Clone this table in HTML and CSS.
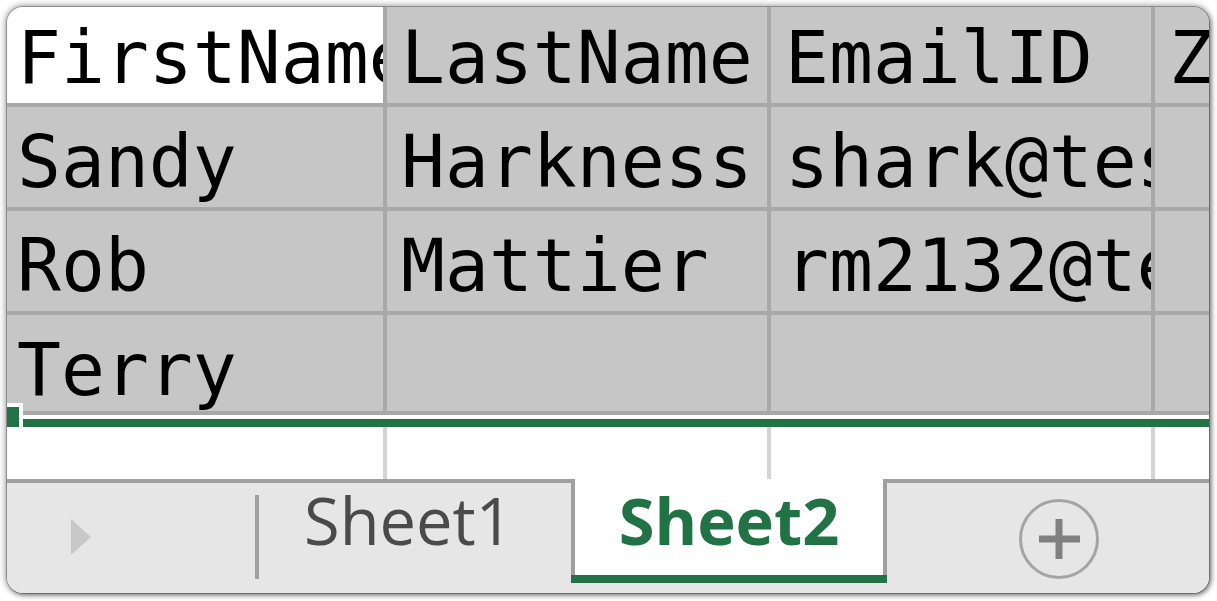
FILE: index.html
```html
<!DOCTYPE html>
<html lang="en">
<head>
<meta charset="utf-8">
<title>Sheet2</title>
<link rel="stylesheet" href="styles.css">
</head>
<body>
<div class="card">
  <div class="sheet">
    <div class="grid">
      <div class="cell active">FirstName</div>
      <div class="cell">LastName</div>
      <div class="cell">EmailID</div>
      <div class="cell">Zip</div>
      <div class="cell">Sandy</div>
      <div class="cell">Harkness</div>
      <div class="cell">shark@test.com</div>
      <div class="cell"></div>
      <div class="cell">Rob</div>
      <div class="cell">Mattier</div>
      <div class="cell">rm2132@test.com</div>
      <div class="cell"></div>
      <div class="cell last">Terry</div>
      <div class="cell last"></div>
      <div class="cell last"></div>
      <div class="cell last"></div>
    </div>
    <div class="sel-edge"></div>
    <div class="grid blank">
      <div class="bcell"></div>
      <div class="bcell"></div>
      <div class="bcell"></div>
      <div class="bcell"></div>
    </div>
    <div class="handle"></div>
  </div>
  <div class="tabbar">
    <div class="nav">
      <svg class="arrow" width="20" height="36" viewBox="0 0 20 36"><polygon points="0,0 20,18 0,36" fill="#c8c8c8"/></svg>
    </div>
    <div class="sep"></div>
    <div class="tab">Sheet1</div>
    <div class="tab-active"><div class="tab-active-inner">Sheet2</div></div>
    <div class="add">
      <svg width="82" height="82" viewBox="0 0 82 82">
        <circle cx="41" cy="41" r="38.5" fill="none" stroke="#a4a4a4" stroke-width="3"/>
        <rect x="21" y="37.5" width="41" height="7" fill="#808080"/>
        <rect x="37.5" y="21" width="7" height="40" fill="#808080"/>
      </svg>
    </div>
  </div>
</div>
</body>
</html>
```

FILE: styles.css
```css
html, body {
  margin: 0;
  padding: 0;
  background: #ffffff;
}

.card {
  margin: 7px;
  width: 1202px;
  height: 586px;
  border-radius: 16px;
  overflow: hidden;
  background: #ffffff;
  display: flex;
  flex-direction: column;
  box-shadow: 0 0 0 1px rgba(0, 0, 0, 0.22), 0 0 7px 1px rgba(0, 0, 0, 0.45), 2px 2px 4px rgba(0, 0, 0, 0.35);
}

.sheet {
  position: relative;
  height: 472px;
  flex: none;
  overflow: hidden;
}

.grid {
  display: grid;
  grid-template-columns: 380px 380px 380px 380px;
  grid-auto-rows: 100px;
  gap: 4px;
  width: 1532px;
  margin: -4px 0 0 -4px;
  background: #a8a8a8;
}

.cell {
  background: #c6c6c6;
  color: #000000;
  font-family: "DejaVu Sans Mono", "Liberation Mono", monospace;
  font-size: 73px;
  line-height: 73px;
  padding: 18px 0 0 14px;
  white-space: nowrap;
  overflow: hidden;
  box-sizing: border-box;
}

.cell.active {
  background: #ffffff;
}

.cell.last {
  height: 96px;
}

.grid .cell.last {
  align-self: start;
}

.sel-edge {
  height: 8px;
  border-top: 4px solid #ffffff;
  background: #217346;
}

.grid.blank {
  margin: 0 0 0 -4px;
  grid-auto-rows: 56px;
  background: #d4d4d4;
}

.bcell {
  background: #ffffff;
}

.handle {
  position: absolute;
  left: -4px;
  top: 396px;
  width: 12px;
  height: 20px;
  border: 4px solid #ffffff;
  background: #217346;
  z-index: 2;
}

.tabbar {
  flex: 1;
  display: flex;
  align-items: flex-start;
  background: #e6e6e6;
  border-top: 4px solid #a0a0a0;
  font-family: "Open Sans", "Noto Sans", sans-serif;
  font-size: 65px;
  line-height: 66px;
}

.nav {
  width: 184px;
  height: 110px;
  padding-left: 64px;
  display: flex;
  align-items: center;
}

.arrow {
  display: block;
  margin-top: -2px;
}

.sep {
  width: 4px;
  height: 84px;
  margin-top: 12px;
  background: #a0a0a0;
}

.tab {
  width: 267px;
  padding: 4px 0 0 45px;
  color: #4a4a4a;
}

.tab-active {
  margin-top: -4px;
  border-bottom: 8px solid #217346;
}

.tab-active-inner {
  width: 308px;
  height: 88px;
  padding-top: 8px;
  background: #ffffff;
  border-left: 4px solid #a0a0a0;
  border-right: 4px solid #a0a0a0;
  color: #217346;
  font-weight: 700;
  text-align: center;
}

.add {
  flex: 1;
  height: 110px;
  padding-left: 131px;
  display: flex;
  align-items: center;
}

.add svg {
  display: block;
  margin-top: 2px;
}
```
